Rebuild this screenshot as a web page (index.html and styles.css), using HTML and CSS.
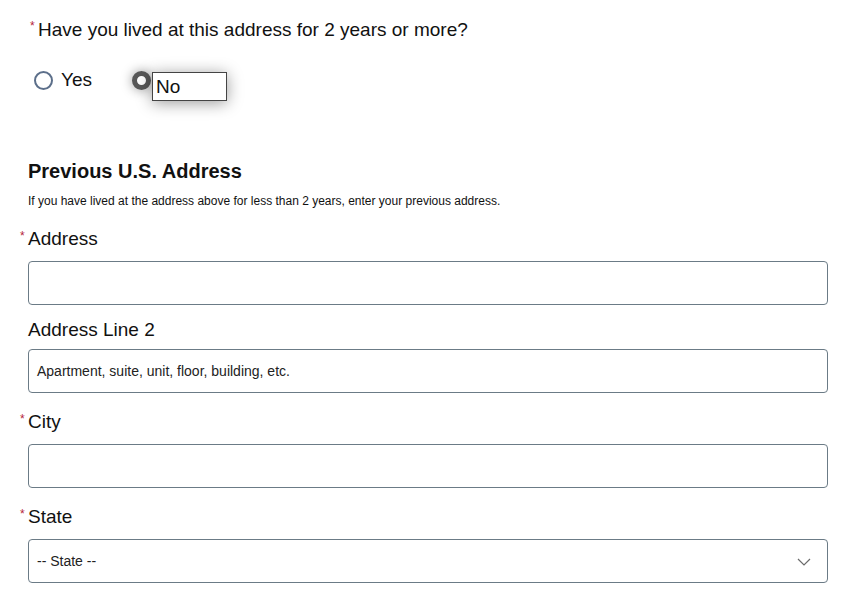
FILE: index.html
```html
<!DOCTYPE html>
<html lang="en">
<head>
<meta charset="utf-8">
<title>Previous U.S. Address</title>
<link rel="stylesheet" href="styles.css">
</head>
<body>
<main class="form">
  <fieldset class="question">
    <legend class="q-label"><span class="req">*</span>Have you lived at this address for 2 years or more?</legend>
    <div class="radios">
      <label class="radio"><span class="dot"></span><span class="r-text">Yes</span></label>
      <label class="radio checked"><span class="dot on"></span><span class="r-text boxed">No</span></label>
    </div>
  </fieldset>

  <section class="prev">
    <h2 class="title">Previous U.S. Address</h2>
    <p class="help">If you have lived at the address above for less than 2 years, enter your previous address.</p>

    <div class="field first">
      <label class="f-label"><span class="req">*</span>Address</label>
      <div class="input"></div>
    </div>
    <div class="field optional">
      <label class="f-label plain">Address Line 2</label>
      <div class="input"><span class="ph">Apartment, suite, unit, floor, building, etc.</span></div>
    </div>
    <div class="field">
      <label class="f-label"><span class="req">*</span>City</label>
      <div class="input"></div>
    </div>
    <div class="field">
      <label class="f-label"><span class="req">*</span>State</label>
      <div class="input select"><span class="ph">-- State --</span>
        <svg class="chev" width="14" height="8" viewBox="0 0 14 8"><path d="M1 1 L7 7 L13 1" fill="none" stroke="#6b6b6b" stroke-width="1.2"/></svg>
      </div>
    </div>
  </section>
</main>
</body>
</html>
```

FILE: styles.css
```css
* { box-sizing: border-box; }
html, body { margin: 0; padding: 0; background: #fff; }
body { font-family: "Liberation Sans", Arial, sans-serif; color: #111; }
.form { width: 850px; padding: 0 22px 0 28px; }

.question { border: 0; margin: 0; padding: 0; }
.q-label { padding: 18px 0 0 2px; font-size: 19px; line-height: 24px; color: #111; }
.req { display: inline-block; width: 8px; color: #b51f3a; font-size: 12px; vertical-align: top; line-height: 14px; position: relative; top: 1px; }

.radios { display: flex; align-items: flex-start; padding: 28px 0 0 6px; }
.radio { display: flex; align-items: center; font-size: 19px; }
.radio:first-child { margin-right: 40px; }
.dot { width: 19px; height: 19px; border-radius: 50%; border: 2px solid #5c6f8a; background: #fff; margin-right: 8px; }
.r-text { line-height: 20px; }
.checked { align-items: flex-start; }
.dot.on { border: 5px solid #585858; margin: 1px 1px 0 0; box-shadow: 0 0 12px rgba(0,0,0,0.4); }
.boxed { display: block; width: 75px; height: 29px; margin-top: 2px; border: 1px solid #444; padding: 4px 0 0 3px; background: #fff; box-shadow: 0 2px 16px rgba(0,0,0,0.4); }

.prev { padding-top: 58px; }
.title { margin: 0; font-size: 20px; font-weight: bold; line-height: 24px; color: #111; }
.help { margin: 11px 0 0; font-size: 12px; line-height: 14px; color: #111; }

.field { margin-top: 17px; }
.field.first { margin-top: 19px; }
.field.optional { margin-top: 13px; }
.f-label { display: block; font-size: 19px; line-height: 24px; margin-left: -8px; }
.f-label.plain { margin-left: 0; }
.f-label .req { top: 2px; }
.input { margin-top: 10px; height: 44px; border: 1px solid #6b7b86; border-radius: 4px; display: flex; align-items: center; padding: 0 8px; position: relative; }
.optional .input { margin-top: 7px; }
.ph { font-size: 14px; color: #222; }
.chev { position: absolute; right: 16px; top: 18px; }
```
